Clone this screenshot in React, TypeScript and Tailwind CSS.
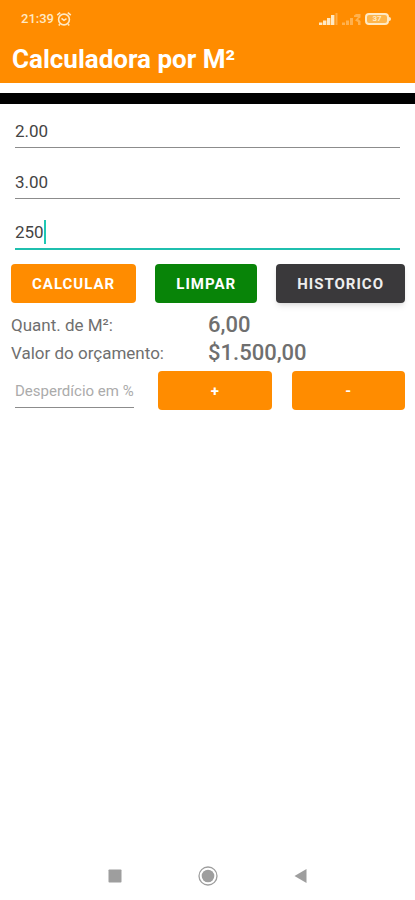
import { useState } from "react";

const formatNumber = (value: number) =>
  value.toLocaleString("pt-BR", { minimumFractionDigits: 2, maximumFractionDigits: 2 });

const StatusBar = () => {
  return (
    <div className="flex items-center justify-between h-[37px] pl-[21px] pr-6 text-[#ffe9c4]">
      <div className="flex items-center gap-0.5">
        <span className="text-[13px] leading-4 font-medium">21:39</span>
        <svg className="w-4 h-4" viewBox="0 0 16 16" fill="none" stroke="currentColor" strokeWidth="1.6">
          <circle cx="8" cy="8.5" r="5.4" />
          <path d="M1.2 4.2 4.2 1.7M14.8 4.2 11.8 1.7M3.8 13.2 2.8 14.4M12.2 13.2l1 1.2" />
          <path d="M5.5 7.3 8 9.3l2.5-1.6" />
        </svg>
      </div>

      <div className="flex items-center gap-1">
        <svg className="w-[19px] h-3" viewBox="0 0 19 12" fill="currentColor">
          <rect x="0" y="9.5" width="3.4" height="2.5" />
          <rect x="4" y="7.5" width="3.4" height="4.5" />
          <rect x="8" y="5" width="3.4" height="7" />
          <rect x="12" y="2" width="3.4" height="10" />
          <rect x="16.5" y="0" width="2" height="12" opacity="0.35" />
        </svg>
        <svg className="w-[19px] h-3" viewBox="0 0 19 12" fill="currentColor" opacity="0.4">
          <rect x="0" y="9.5" width="3" height="2.5" />
          <rect x="4" y="7.5" width="3" height="4.5" />
          <rect x="8" y="5" width="3" height="7" />
          <path d="M12 2.5 14 1h4.5v3.5L16 6l2.5 2v4H16V9l-3-1.5L16 4h-4z" />
        </svg>
        <div className="flex items-center">
          <div className="flex items-center justify-center w-6 h-3 rounded border-2 border-current bg-[#ffb54a] text-[8px] leading-none font-bold">
            37
          </div>
          <div className="w-0.5 h-1 rounded-r bg-current"></div>
        </div>
      </div>
    </div>
  );
};

type FieldProps = {
  label: string;
  value: string;
  active: boolean;
  onFocus: () => void;
  onChange: (value: string) => void;
};

const Field = ({ label, value, active, onFocus, onChange }: FieldProps) => {
  return (
    <div className="relative text-[17px] leading-6">
      <input
        type="text"
        inputMode="decimal"
        aria-label={label}
        value={value}
        onFocus={onFocus}
        onChange={(e) => onChange(e.target.value)}
        className={
          active
            ? "block w-full h-[34px] border-b-2 border-[#1fbfae] text-[#444444] caret-transparent outline-none"
            : "block w-full h-[34px] border-b border-[#8c8c8c] text-[#444444] caret-transparent outline-none"
        }
      />
      {/* Cursor, placed right after the typed text */}
      {active && (
        <div aria-hidden="true" className="absolute left-0 top-1 flex pointer-events-none">
          <span className="invisible">{value}</span>
          <span className="w-0.5 h-6 bg-[#1fc8b4]"></span>
        </div>
      )}
    </div>
  );
};

const App = () => {
  const [width, setWidth] = useState("2.00");
  const [height, setHeight] = useState("3.00");
  const [price, setPrice] = useState("250");
  const [waste, setWaste] = useState("");
  const [active, setActive] = useState("price");
  const [area, setArea] = useState(6);
  const [total, setTotal] = useState(1500);

  const calculate = () => {
    const m2 = Number(width) * Number(height) || 0;
    setArea(m2);
    setTotal(m2 * Number(price) || 0);
  };

  const clear = () => {
    setWidth("");
    setHeight("");
    setPrice("");
    setWaste("");
    setArea(0);
    setTotal(0);
  };

  const applyWaste = (sign: number) => {
    const factor = 1 + (sign * (Number(waste) || 0)) / 100;
    setTotal(total * factor);
  };

  return (
    <div className="flex flex-col min-h-screen bg-white font-[Roboto,sans-serif]">
      <header className="bg-[#ff8c00] pb-1.5">
        <StatusBar />
        <h1 className="px-3 pt-1 text-[26px] leading-9 font-bold text-white">Calculadora por M²</h1>
      </header>
      <div className="mt-2.5 h-[11px] bg-black"></div>

      <main className="pl-[11px] pr-2.5 pt-2.5">
        <div className="flex flex-col gap-[17px] pl-1 pr-[5px]">
          <Field label="Largura" value={width} active={active === "width"} onFocus={() => setActive("width")} onChange={setWidth} />
          <Field label="Altura" value={height} active={active === "height"} onFocus={() => setActive("height")} onChange={setHeight} />
          <Field label="Valor por M²" value={price} active={active === "price"} onFocus={() => setActive("price")} onChange={setPrice} />
        </div>

        <div className="flex justify-between mt-3.5 text-[15px] leading-5 font-bold tracking-[1px] text-white">
          <button onClick={calculate} className="h-[39px] px-[21px] rounded bg-[#ff8c00]">CALCULAR</button>
          <button onClick={clear} className="h-[39px] px-[21px] rounded bg-[#088408]">LIMPAR</button>
          <button className="h-[39px] px-[21px] rounded bg-[#3a393b] text-[#eeeeee] shadow-md">HISTORICO</button>
        </div>

        {/* Results */}
        <dl className="grid grid-cols-2 items-center mt-2 text-[#6f6f6f]">
          <dt className="text-[17px] leading-7">Quant. de M²:</dt>
          <dd className="text-[22px] leading-7 font-medium">{formatNumber(area)}</dd>
          <dt className="text-[17px] leading-7">Valor do orçamento:</dt>
          <dd className="text-[22px] leading-7 font-medium">${formatNumber(total)}</dd>
        </dl>

        <div className="flex gap-5 mt-1 text-[15px] leading-5">
          <input
            type="text"
            inputMode="decimal"
            aria-label="Desperdício em %"
            placeholder="Desperdício em %"
            value={waste}
            onChange={(e) => setWaste(e.target.value)}
            className="w-[119px] h-[37px] pt-1 ml-1 mr-1 border-b border-[#8c8c8c] text-[#444444] placeholder-[#ababab] outline-none"
          />
          <button onClick={() => applyWaste(1)} className="flex-1 h-[39px] rounded bg-[#ff8c00] font-bold text-white">+</button>
          <button onClick={() => applyWaste(-1)} className="flex-1 h-[39px] rounded bg-[#ff8c00] font-bold text-white">-</button>
        </div>
      </main>

      <nav className="flex items-center justify-center gap-[75px] h-12 mt-auto text-[#9e9e9e]">
        <button aria-label="Recentes">
          <svg className="w-4 h-4" viewBox="0 0 16 16" fill="currentColor">
            <rect x="1.5" y="1.5" width="13" height="13" rx="0.8" />
          </svg>
        </button>
        <button aria-label="Início">
          <svg className="w-5 h-5" viewBox="0 0 20 20">
            <circle cx="10" cy="10" r="9" fill="none" stroke="currentColor" strokeWidth="1.3" />
            <circle cx="10" cy="10" r="6.3" fill="currentColor" />
          </svg>
        </button>
        <button aria-label="Voltar">
          <svg className="w-4 h-4" viewBox="0 0 16 16" fill="currentColor">
            <path d="M1.5 8 13.5 1v14z" />
          </svg>
        </button>
      </nav>
    </div>
  );
};

export default App;
